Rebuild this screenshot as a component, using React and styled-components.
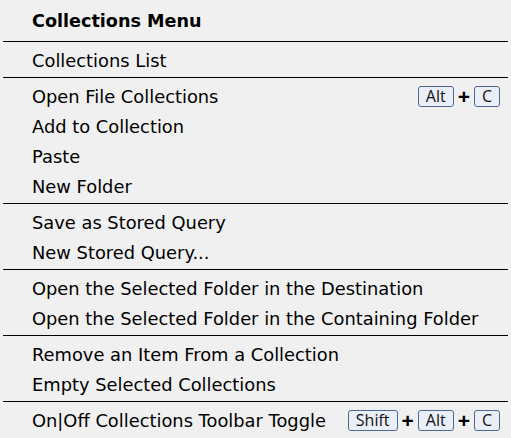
import React from 'react'
import styled, { createGlobalStyle } from 'styled-components';

const GlobalStyle = createGlobalStyle`
  html, body {
    margin: 0;
    padding: 0;
    background: #f0f0f0;
  }
`

const sections = [
  [{ label: 'Collections List' }],
  [
    { label: 'Open File Collections', keys: ['Alt', 'C'] },
    { label: 'Add to Collection' },
    { label: 'Paste' },
    { label: 'New Folder' },
  ],
  [{ label: 'Save as Stored Query' }, { label: 'New Stored Query...' }],
  [
    { label: 'Open the Selected Folder in the Destination' },
    { label: 'Open the Selected Folder in the Containing Folder' },
  ],
  [{ label: 'Remove an Item From a Collection' }, { label: 'Empty Selected Collections' }],
  [{ label: 'On|Off Collections Toolbar Toggle', keys: ['Shift', 'Alt', 'C'] }],
];

const Shortcut = ({ keys }) => (
  <Keys>
    {keys.map((k, i) => (
      <React.Fragment key={k}>
        {i > 0 && <Plus>+</Plus>}
        <Key>{k}</Key>
      </React.Fragment>
    ))}
  </Keys>
);

const App = () => {
  return (
    <Menu>
      <GlobalStyle />
      <Title>Collections Menu</Title>
      {sections.map((items, si) => (
        <Section key={si}>
          {items.map(item => (
            <Row key={item.label}>
              <Label>{item.label}</Label>
              {item.keys && <Shortcut keys={item.keys} />}
            </Row>
          ))}
        </Section>
      ))}
    </Menu>
  )
}

export default App;

const Menu = styled.div`
  width: 505px;
  margin: 0 3px;
  font-family: "DejaVu Sans", Verdana, sans-serif;
  font-size: 17.85px;
  color: #000;
`

const Title = styled.div`
  height: 41px;
  display: flex;
  align-items: center;
  padding-left: 29px;
  font-size: 17.6px;
  font-weight: bold;
`

const Section = styled.div`
  border-top: 1px solid #000;
  padding: 3px 0 2px;
`

const Row = styled.div`
  height: 30px;
  display: flex;
  align-items: center;
  justify-content: space-between;
  padding: 0 8px 0 29px;
`

const Label = styled.span`
  white-space: nowrap;
`

const Keys = styled.div`
  display: flex;
  align-items: center;
  gap: 4px;
`

const Key = styled.span`
  box-sizing: border-box;
  height: 21px;
  padding: 0 7px;
  display: inline-flex;
  align-items: center;
  border: 1px solid #4d6b91;
  border-radius: 3px;
  background: #e9eef7;
  font-family: "Open Sans", "Noto Sans", sans-serif;
  font-size: 16px;
  color: #111;
`

const Plus = styled.span`
  font-family: "Liberation Sans", Arial, sans-serif;
  font-size: 21px;
  font-weight: bold;
  line-height: 1;
`
